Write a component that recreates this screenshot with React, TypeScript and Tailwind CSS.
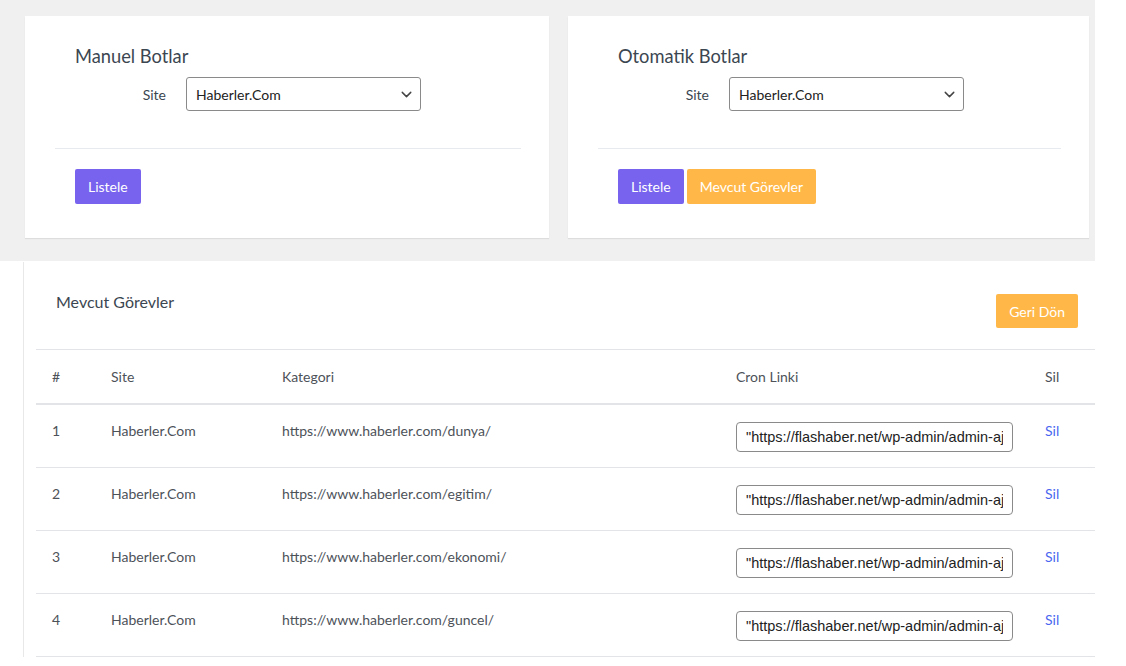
import { ChevronDown } from 'lucide-react';

const rows = [
  { id: 1, site: 'Haberler.Com', kategori: 'https://www.haberler.com/dunya/' },
  { id: 2, site: 'Haberler.Com', kategori: 'https://www.haberler.com/egitim/' },
  { id: 3, site: 'Haberler.Com', kategori: 'https://www.haberler.com/ekonomi/' },
  { id: 4, site: 'Haberler.Com', kategori: 'https://www.haberler.com/guncel/' },
];

const cron = '"https://flashaber.net/wp-admin/admin-ajax.php?action=bot_cron"';

function BotCard({ title, width, showTasks }: { title: string; width: string; showTasks?: boolean }) {
  return (
    <div className={`${width} h-[222px] bg-white shadow-[0_1px_1px_rgba(0,0,0,0.08)] pl-[30px] pr-[28px] pt-[29px]`}>
      <div className="pl-5">
        <h4 className="text-[18.3px] leading-[22px] text-[#3b4651]">{title}</h4>
        <div className="flex items-center mt-[10px]">
          <label className="w-[91px] text-right text-[14px] text-[#3b4651]">Site</label>
          <div className="ml-5 w-[235px] h-[34px] border border-[#8a8a8a] rounded-[3px] flex items-center justify-between pl-[9px] pr-[5px] text-[14px] text-[#222]">
            <span>Haberler.Com</span>
            <ChevronDown size={17} strokeWidth={2} className="text-[#444] mt-px" />
          </div>
        </div>
      </div>
      <div className="mt-[37px] border-t border-[#e7eaee]" />
      <div className="flex gap-[3px] mt-5 pl-5">
        <button className="h-[35px] px-[13px] rounded-[2px] bg-[#7763ee] text-white text-[14px]">Listele</button>
        {showTasks && (
          <button className="h-[35px] px-[13px] rounded-[2px] bg-[#ffb848] text-white text-[14px]">Mevcut Görevler</button>
        )}
      </div>
    </div>
  );
}

export default function App() {
  return (
    <div className="w-[1095px] bg-white font-['Lato',sans-serif]">
      <div className="bg-[#f0f0f0] pt-4 pb-[23px] pl-[25px] flex gap-[19px]">
        <BotCard title="Manuel Botlar" width="w-[524px]" />
        <BotCard title="Otomatik Botlar" width="w-[521px]" showTasks />
      </div>
      <div className="ml-[23px] border-l border-[#e8e8e8] pl-3 mt-px">
        <div className="flex justify-between items-start h-[87px] pl-5 pr-[17px]">
          <h5 className="mt-[31px] text-[16px] leading-[18px] text-[#3b4651]">Mevcut Görevler</h5>
          <button className="mt-[32px] h-[34px] px-[13px] rounded-[2px] bg-[#ffb848] text-white text-[14px]">Geri Dön</button>
        </div>
        <table className="w-full border-collapse text-[14px] text-[#4d5259]">
          <thead>
            <tr className="border-t border-b-2 border-[#e2e4e7] h-[54px]">
              <th className="font-normal text-left pl-4 w-[75px]">#</th>
              <th className="font-normal text-left w-[171px]">Site</th>
              <th className="font-normal text-left w-[454px]">Kategori</th>
              <th className="font-normal text-left w-[309px]">Cron Linki</th>
              <th className="font-normal text-left">Sil</th>
            </tr>
          </thead>
          <tbody>
            {rows.map((r) => (
              <tr key={r.id} className="border-b border-[#e2e4e7]">
                <td className="pl-4 align-top pt-[17px] pb-[14px]"><div className="leading-[18px]">{r.id}</div></td>
                <td className="align-top pt-[17px]"><div className="leading-[18px]">{r.site}</div></td>
                <td className="align-top pt-[17px]"><div className="leading-[18px]">{r.kategori}</div></td>
                <td className="align-top pt-[17px] pb-[15px]">
                  <input
                    readOnly
                    value={cron}
                    className="w-[277px] h-[30px] border border-[#8a8a8a] rounded-[4px] px-[9px] text-[14.5px] text-[#222] outline-none font-['Liberation_Sans',sans-serif]"
                  />
                </td>
                <td className="align-top pt-[17px]"><div className="leading-[18px] text-[#4a67f0]">Sil</div></td>
              </tr>
            ))}
          </tbody>
        </table>
      </div>
    </div>
  );
}
